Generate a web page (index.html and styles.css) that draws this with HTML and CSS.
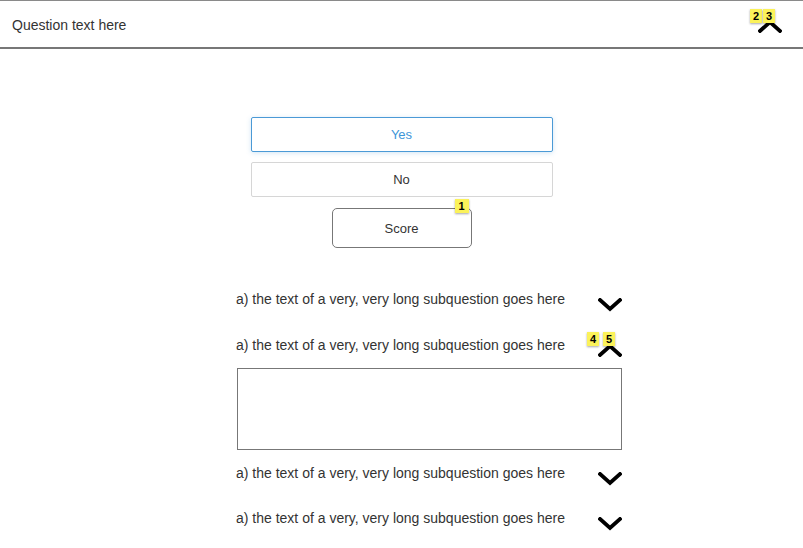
FILE: index.html
```html
<!DOCTYPE html>
<html>
<head>
<meta charset="utf-8">
<link rel="stylesheet" href="styles.css">
</head>
<body>
<header class="qhead">
  <span class="qtitle">Question text here</span>
  <span class="icon-wrap head-icon">
    <svg class="chev" viewBox="0 0 24 14" width="24" height="14"><path d="M2 12 L12 3 L22 12" /></svg>
    <span class="badges">
      <span class="badge">2</span><span class="badge">3</span>
    </span>
  </span>
</header>
<main class="content">
  <div class="choices">
    <button class="choice selected">Yes</button>
    <button class="choice">No</button>
    <div class="score-wrap">
      <button class="score">Score</button>
      <span class="badge score-badge">1</span>
    </div>
  </div>
  <div class="subs">
    <div class="sub-row">
      <span class="sub-text">a) the text of a very, very long subquestion goes here</span>
      <svg class="chev down" viewBox="0 0 24 14" width="24" height="14"><path d="M2 2 L12 11 L22 2" /></svg>
    </div>
    <div class="sub-row">
      <span class="sub-text">a) the text of a very, very long subquestion goes here</span>
      <span class="icon-wrap row-icon">
        <svg class="chev" viewBox="0 0 24 14" width="24" height="14"><path d="M2 12 L12 3 L22 12" /></svg>
        <span class="badges wide">
          <span class="badge">4</span><span class="badge">5</span>
        </span>
      </span>
    </div>
    <div class="answer-box"></div>
    <div class="sub-row">
      <span class="sub-text">a) the text of a very, very long subquestion goes here</span>
      <svg class="chev down" viewBox="0 0 24 14" width="24" height="14"><path d="M2 2 L12 11 L22 2" /></svg>
    </div>
    <div class="sub-row">
      <span class="sub-text">a) the text of a very, very long subquestion goes here</span>
      <svg class="chev down" viewBox="0 0 24 14" width="24" height="14"><path d="M2 2 L12 11 L22 2" /></svg>
    </div>
  </div>
</main>
</body>
</html>
```
FILE: styles.css
```css
* { box-sizing: border-box; }
body {
  margin: 0;
  font-family: "Liberation Sans", Arial, sans-serif;
  color: #333;
  background: #fff;
}
.qhead {
  height: 49px;
  border-top: 1px solid #8a8a8a;
  border-bottom: 2px solid #777;
  display: flex;
  align-items: center;
  justify-content: space-between;
  padding: 0 21px 0 12px;
}
.qtitle { font-size: 14px; color: #333; margin-top: 2px; }
.icon-wrap { position: relative; display: inline-flex; }
.chev { display: block; }
.chev path {
  fill: none;
  stroke: #000;
  stroke-width: 3.8;
  stroke-linecap: square;
  stroke-linejoin: miter;
}
.head-icon { margin-top: 4px; }
.badges {
  position: absolute;
  display: flex;
  gap: 1px;
  left: -8px;
  top: -10px;
}
.badges.wide { gap: 4px; left: -11px; top: -11px; }
.badge {
  display: inline-flex;
  align-items: center;
  justify-content: center;
  width: 12px;
  height: 14px;
  background: #fbf25a;
  color: #000;
  font-size: 11px;
  font-weight: bold;
  box-shadow: 0 1px 2px rgba(0,0,0,0.35);
}
.content { padding-top: 68px; }
.choices {
  width: 302px;
  margin: 0 auto;
  display: flex;
  flex-direction: column;
  align-items: center;
}
.choice {
  width: 302px;
  height: 35px;
  font-family: inherit;
  font-size: 13px;
  color: #333;
  background: #fff;
  border: 1px solid #d6d6d6;
  border-radius: 2px;
  margin: 0 0 10px;
}
.choice.selected {
  border-color: #4b9ad6;
  color: #3d95d8;
  box-shadow: 0 1px 5px rgba(75, 154, 214, 0.25);
}
.score-wrap { position: relative; margin-top: 1px; }
.score {
  width: 140px;
  height: 40px;
  font-family: inherit;
  font-size: 13px;
  color: #333;
  background: #fff;
  border: 1px solid #777;
  border-radius: 5px;
}
.score-badge {
  position: absolute;
  top: -9px;
  right: 3px;
  width: 14px;
}
.subs {
  width: 386px;
  margin: 28px 0 0 236px;
}
.sub-row {
  height: 46px;
  display: flex;
  align-items: center;
  justify-content: space-between;
}
.sub-row:nth-child(n+4) { height: 45px; }
.sub-text { font-size: 14px; color: #333; }
.chev.down { margin-top: 12px; }
.row-icon { margin-top: 10px; }
.answer-box {
  width: 385px;
  height: 82px;
  margin-left: 1px;
  border: 1px solid #777;
}
```
